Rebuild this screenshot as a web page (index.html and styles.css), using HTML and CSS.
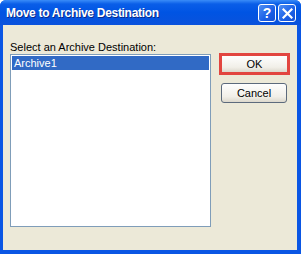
FILE: index.html
```html
<!DOCTYPE html>
<html>
    <head>
        <meta charset="utf-8">
        <title>Move to Archive Destination</title>
        <link rel="stylesheet" href="styles.css">
    </head>
    <body>
        <div class="window">
            <div class="titlebar">
                <span class="title">Move to Archive Destination</span>
                <div class="title-btns">
                    <span class="tbtn help">?</span>
                    <span class="tbtn close">
                        <svg width="11" height="11" viewBox="0 0 11 11">
                            <path d="M1.5 1.5 L9.5 9.5 M9.5 1.5 L1.5 9.5" stroke="#fff" stroke-width="2.2" stroke-linecap="square"/>
                        </svg>
                    </span>
                </div>
            </div>
            <div class="content">
                <div class="left">
                    <label class="caption">Select an Archive Destination:</label>
                    <div class="list">
                        <div class="item selected">Archive1</div>
                    </div>
                </div>
                <div class="right">
                    <div class="ok-wrap">
                        <button class="btn btn-ok">OK</button>
                    </div>
                    <button class="btn btn-cancel">Cancel</button>
                </div>
            </div>
        </div>
    </body>
</html>
```

FILE: styles.css
```css
*{
    margin: 0;
    padding: 0;
    box-sizing: border-box;
}
body{
    width: 301px;
    height: 254px;
    overflow: hidden;
    font-family: 'Liberation Sans', Arial, sans-serif;
    font-size: 11px;
    background-color: #fff;
}
.window{
    width: 301px;
    height: 254px;
    display: flex;
    flex-direction: column;
    background-color: #0a56e4;
    border-radius: 6px 6px 0 0;
    padding: 0 4px 4px 3px;
}
.titlebar{
    height: 25px;
    display: flex;
    flex-direction: row;
    align-items: center;
    justify-content: space-between;
    margin: 0 -4px 0 -3px;
    padding: 0 5px 0 6px;
    border-radius: 6px 6px 0 0;
    background: linear-gradient(#3a8cf8 0, #0a5ee8 4px, #0054e3 50%, #0a52dc 100%);
}
.title{
    color: #fff;
    font-weight: bold;
    font-size: 12px;
    letter-spacing: -0.3px;
    text-shadow: 1px 1px 0 #0a2a8a;
    padding-top: 1px;
}
.title-btns{
    display: flex;
    flex-direction: row;
    gap: 2px;
    padding-top: 1px;
}
.tbtn{
    width: 18px;
    height: 18px;
    display: flex;
    align-items: center;
    justify-content: center;
    border: 1px solid #fff;
    border-radius: 3px;
    background: linear-gradient(135deg, #4f8ff5, #1a5fe6 60%, #1650d4);
    color: #fff;
    font-weight: bold;
    font-size: 14px;
}
.content{
    flex: 1;
    display: flex;
    flex-direction: row;
    background-color: #ece9d8;
    padding: 16px 0 0 7px;
}
.left{
    display: flex;
    flex-direction: column;
}
.caption{
    height: 13px;
    line-height: 13px;
    color: #000;
}
.list{
    width: 201px;
    height: 173px;
    background-color: #fff;
    border: 1px solid #7f9db9;
    padding: 1px 1px;
}
.item{
    height: 14px;
    line-height: 14px;
    padding-left: 2px;
}
.item.selected{
    background-color: #316ac5;
    color: #fff;
}
.right{
    display: flex;
    flex-direction: column;
    align-items: flex-start;
    padding: 12px 0 0 8px;
    gap: 8px;
}
.ok-wrap{
    width: 71px;
    height: 22px;
    border: 3px solid #e2453f;
}
.btn{
    font-family: 'Liberation Sans', Arial, sans-serif;
    font-size: 11px;
    color: #000;
    background: linear-gradient(#fefefe, #f1efe8 70%, #dcd8cc);
}
.btn-ok{
    width: 65px;
    height: 16px;
    border: none;
}
.btn-cancel{
    width: 66px;
    height: 20px;
    margin-left: 2px;
    border: 1px solid #5c6a7c;
    border-radius: 3px;
}
```
